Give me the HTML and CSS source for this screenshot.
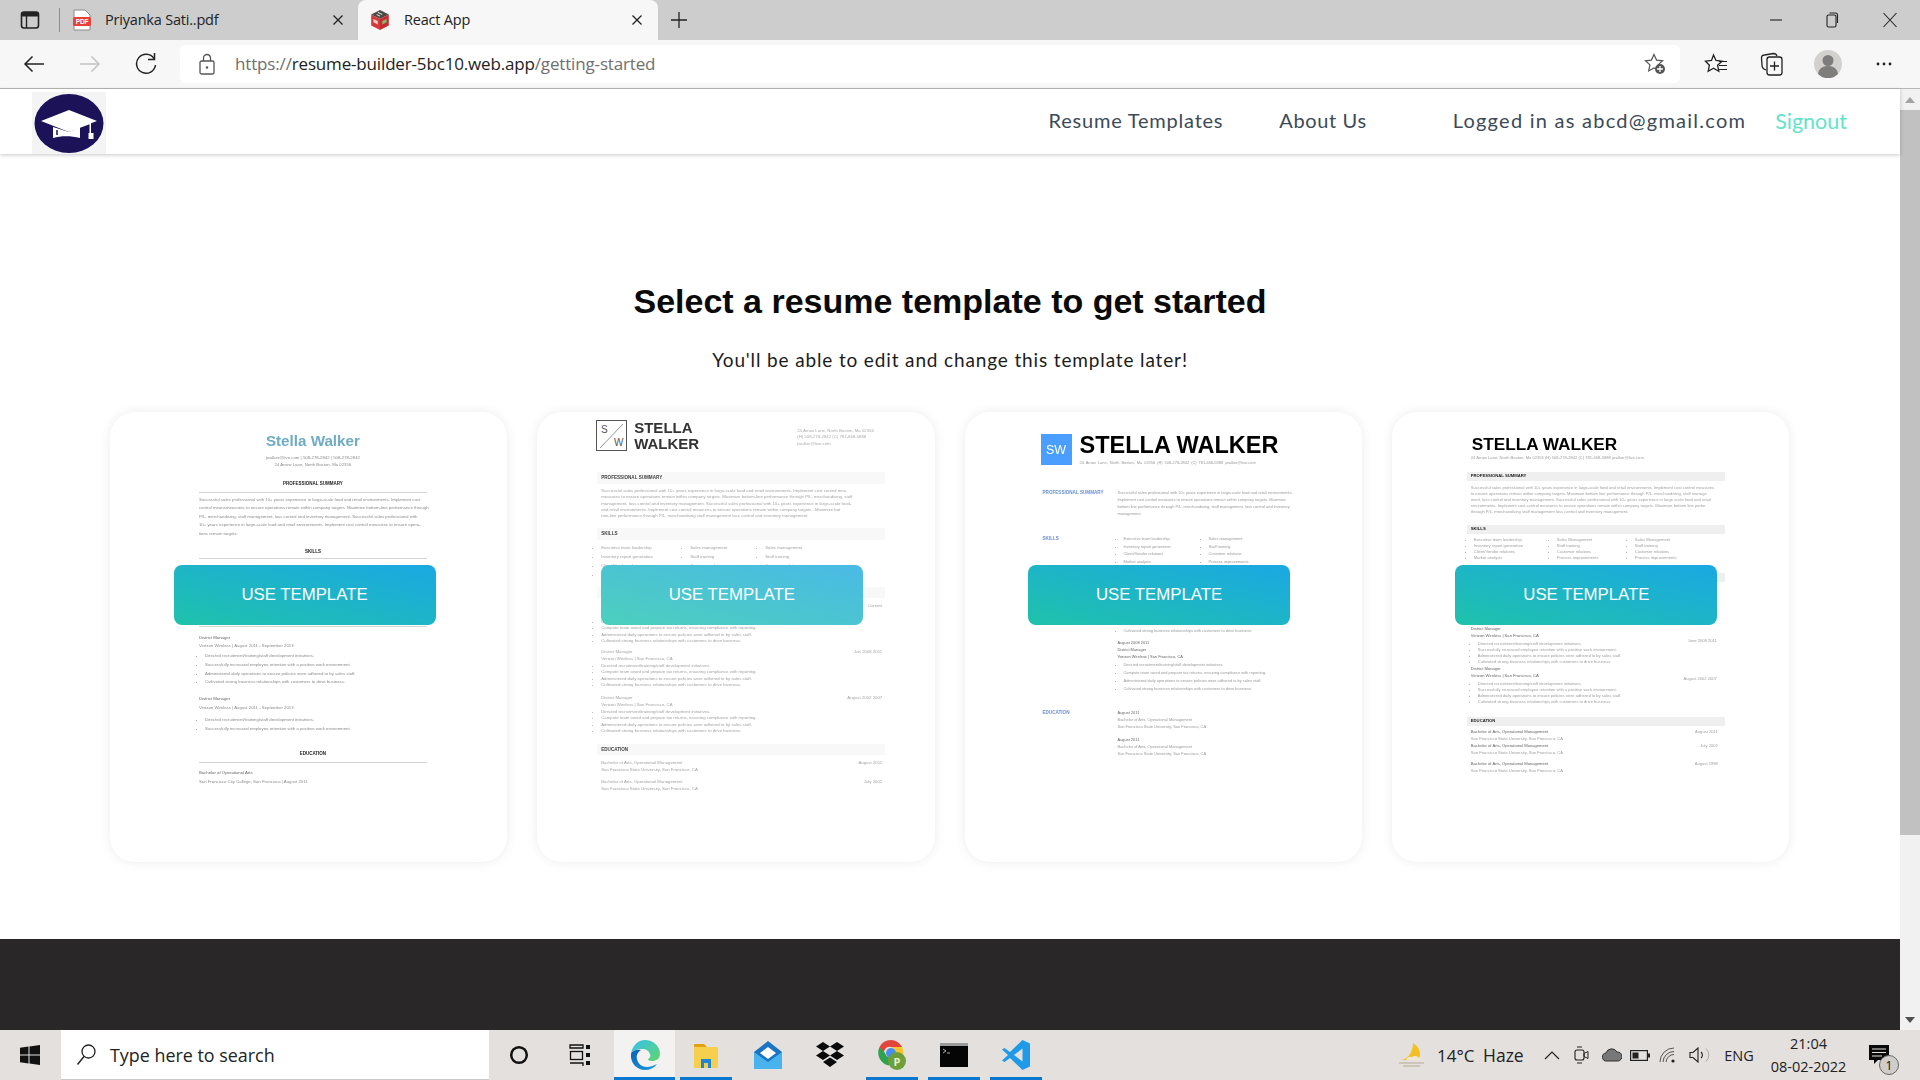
FILE: index.html
```html
<!DOCTYPE html>
<html lang="en">
<head>
<meta charset="utf-8">
<title>React App</title>
<link rel="stylesheet" href="styles.css">
</head>
<body>
<div class="screen">
  <div class="tabbar">
    <div class="tabs-toggle"><svg width="20" height="18" viewBox="0 0 20 18"><rect x="1.5" y="1" width="17" height="16" rx="2.5" fill="none" stroke="#222" stroke-width="1.6"/><rect x="1.5" y="1" width="17" height="4.5" rx="1.5" fill="#222"/><path d="M6.5 5v12" stroke="#222" stroke-width="1.4"/></svg></div>
    <div class="tab-sep"></div>
    <div class="tab tab-idle">
      <svg class="tab-ico" width="18" height="22" viewBox="0 0 18 22"><path d="M1 1h11l5 5v15H1z" fill="#fff" stroke="#8a8a8a"/><rect x="0" y="8" width="18" height="9" rx="1.5" fill="#e8413c"/><text x="9" y="15" class="pdf-txt">PDF</text></svg>
      <span class="tab-title">Priyanka Sati..pdf</span>
      <svg class="tab-x" width="16" height="16" viewBox="0 0 16 16"><path d="M3.5 3.5l9 9M12.5 3.5l-9 9" stroke="#222" stroke-width="1.3"/></svg>
    </div>
    <div class="tab tab-active">
      <svg class="tab-ico" width="22" height="22" viewBox="0 0 20 20"><path d="M10 1l8 4-8 4-8-4z" fill="#4b4b4b"/><path d="M2 5l8 4v10l-8-4z" fill="#d33a3a"/><path d="M18 5l-8 4v10l8-4z" fill="#c9292f"/><path d="M4 9l4 2v3l-4-2z" fill="#f0c9c9"/><path d="M12 11l4-2v3l-4 2z" fill="#7dbb6a"/><path d="M8 3l4 2M7 5l3 1.5" stroke="#fff" stroke-width=".8"/></svg>
      <span class="tab-title">React App</span>
      <svg class="tab-x" width="16" height="16" viewBox="0 0 16 16"><path d="M3.5 3.5l9 9M12.5 3.5l-9 9" stroke="#222" stroke-width="1.3"/></svg>
    </div>
    <div class="tab-new"><svg width="18" height="18" viewBox="0 0 18 18"><path d="M9 1v16M1 9h16" stroke="#222" stroke-width="1.3"/></svg></div>
    <div class="win-ctrls">
      <div class="win-btn"><svg width="14" height="14" viewBox="0 0 14 14"><path d="M1 7h12" stroke="#222" stroke-width="1.1"/></svg></div>
      <div class="win-btn"><svg width="14" height="16" viewBox="0 0 14 16"><rect x="2" y="3" width="9" height="12" rx="1.5" fill="none" stroke="#222" stroke-width="1.1"/><path d="M4.5 1h6a2 2 0 0 1 2 2v8" fill="none" stroke="#222" stroke-width="1.1"/></svg></div>
      <div class="win-btn win-close"><svg width="16" height="16" viewBox="0 0 16 16"><path d="M1.5 1l13 14M14.5 1l-13 14" stroke="#222" stroke-width="1.1"/></svg></div>
    </div>
  </div>

  <div class="toolbar">
    <div class="tool"><svg width="22" height="18" viewBox="0 0 22 18"><path d="M21 9H2M9.5 1.5L2 9l7.5 7.5" fill="none" stroke="#222" stroke-width="1.5"/></svg></div>
    <div class="tool"><svg width="22" height="18" viewBox="0 0 22 18"><path d="M1 9h19M12.5 1.5L20 9l-7.5 7.5" fill="none" stroke="#c4c4c4" stroke-width="1.5"/></svg></div>
    <div class="tool"><svg width="22" height="24" viewBox="0 0 22 24"><path d="M19 6.5A9.5 9.5 0 1 0 20.5 13" fill="none" stroke="#222" stroke-width="1.5"/><path d="M19.5 1v6.5H13" fill="none" stroke="#222" stroke-width="1.5"/></svg></div>
    <div class="address">
      <svg class="lock" width="18" height="22" viewBox="0 0 18 22"><rect x="2" y="8" width="14" height="13" rx="1.5" fill="none" stroke="#555" stroke-width="1.3"/><path d="M5.5 8V5a3.5 3.5 0 0 1 7 0v3" fill="none" stroke="#555" stroke-width="1.3"/><circle cx="9" cy="14.5" r="1.2" fill="#555"/></svg>
      <span class="url"><span class="url-dim">https://</span>resume-builder-5bc10.web.app<span class="url-dim">/getting-started</span></span>
      <svg class="star-add" width="22" height="22" viewBox="0 0 22 22"><path d="M10 1.5l2.6 5.6 6 .7-4.5 4.1 1.2 6-5.3-3-5.3 3 1.2-6L1.4 7.8l6-.7z" fill="none" stroke="#555" stroke-width="1.2"/><circle cx="16" cy="16" r="5" fill="#555"/><path d="M16 13v6M13 16h6" stroke="#fff" stroke-width="1.3"/></svg>
    </div>
    <div class="tool"><svg width="24" height="22" viewBox="0 0 24 22"><path d="M9.5 2l2.5 5.5 6 .7-4.4 4 1.2 6-5.3-3-5.3 3 1.2-6L1.5 8.200l6-.7z" fill="none" stroke="#222" stroke-width="1.3"/><path d="M15 8.500h8M15 12.500h8M15 16.500h8" stroke="#222" stroke-width="1.2"/></svg></div>
    <div class="tool"><svg width="24" height="24" viewBox="0 0 24 24"><path d="M6 18C3 17 2 16 2 13L1.500 6c0-2 1-3 3-3l9-1.500c2 0 3 1 3.500 2.500" fill="none" stroke="#222" stroke-width="1.3"/><rect x="7" y="5" width="15" height="18" rx="2.500" fill="none" stroke="#222" stroke-width="1.3"/><path d="M14.500 9.500v9M10 14h9" stroke="#222" stroke-width="1.3"/></svg></div>
    <div class="tool"><svg width="28" height="28" viewBox="0 0 28 28"><circle cx="14" cy="14" r="14" fill="#d3d1cd"/><circle cx="14" cy="10.500" r="5.500" fill="#7f7d7b"/><path d="M4 24c1-6 5-8 10-8s9 2 10 8a14 14 0 0 1-20 0z" fill="#7f7d7b"/></svg></div>
    <div class="tool"><svg width="18" height="4" viewBox="0 0 18 4"><circle cx="3" cy="2" r="1.400" fill="#222"/><circle cx="9" cy="2" r="1.400" fill="#222"/><circle cx="15" cy="2" r="1.400" fill="#222"/></svg></div>
  </div>

  <div class="viewport">
    <div class="page">
      <nav class="navbar">
        <div class="logo"><svg width="74" height="62" viewBox="0 0 74 62"><ellipse cx="37" cy="31.500" rx="34.500" ry="29.500" fill="#1b1258"/><path d="M37 18l28 11-6 2.300v9.700h2.500v6h-5v-6h1v-8.700L37 40 9 29z" fill="#fff"/><path d="M21 35v11c8-2.500 18-2.500 27 0V35l-11 5z" fill="#fff"/><path d="M25 38v5" stroke="#1b1258" stroke-width="1.500"/></svg></div>
        <div class="nav-links">
          <a class="nav-link">Resume Templates</a>
          <a class="nav-link nav-about">About Us</a>
          <span class="nav-link nav-user">Logged in as abcd@gmail.com</span>
          <a class="nav-signout">Signout</a>
        </div>
      </nav>

      <main class="hero">
        <h1 class="hero-title">Select a resume template to get started</h1>
        <p class="hero-sub">You'll be able to edit and change this template later!</p>

        <div class="cards">
          <article class="card">
            <div class="resume r1">
              <div class="r1-name">Stella Walker</div>
              <div class="r1-contact">jwalker@live.com | 508-278-2842 | 508-278-2842<br>24 Arrow Lane, North Boston, Ma 02356</div>
              <div class="r1-head">PROFESSIONAL SUMMARY</div>
              <p class="r1-para">Successful sales professional with 10+ years experience in large-scale food and retail environments. Implement cost<br>control meansmeasures to ensure operations remain within company targets. Maximize bottom-line performance through<br>P/L, merchandising, staff management, loss control and inventory management. Successful sales professional with<br>10+ years experience in large-scale food and retail environments. Implement cost control measures to ensure opera-<br>tions remain targets.</p>
              <div class="r1-head r1-skills">SKILLS</div>
              <div class="r1-head r1-work">WORK HISTORY</div>
              <div class="r1-job"><b>District Manager</b><br>Verizon Wireless | August 2011 - September 2013</div>
              <ul class="r1-list"><li>Directed recruitment/training/staff development initiatives.</li><li>Successfully increased employee retention with a positive work environment.</li><li>Administered daily operations to ensure policies were adhered to by sales staff.</li><li>Cultivated strong business relationships with customers to drive business.</li></ul>
              <div class="r1-job r1-job2"><b>District Manager</b><br>Verizon Wireless | August 2011 - September 2013</div>
              <ul class="r1-list r1-list2"><li>Directed recruitment/training/staff development initiatives.</li><li>Successfully increased employee retention with a positive work environment.</li></ul>
              <div class="r1-head r1-edu">EDUCATION</div>
              <div class="r1-job r1-school"><b>Bachelor of Operational Arts</b><br>San Francisco City College, San Francisco | August 2011</div>
            </div>
            <button class="use-btn">USE TEMPLATE</button>
          </article>

          <article class="card">
            <div class="resume r2">
              <header class="r2-header">
                <svg class="r2-mark" width="31" height="31" viewBox="0 0 31 31"><rect x=".5" y=".5" width="30" height="30" fill="#fff" stroke="#555"/><path d="M27 4L4 28" stroke="#777" stroke-width=".8"/><text x="5" y="13" class="r2-mark-txt">S</text><text x="18" y="26" class="r2-mark-txt">W</text></svg>
                <div class="r2-name">STELLA<br>WALKER</div>
                <div class="r2-contact">24 Arrow Lane, North Boston, Ma 02356<br>(H) 508-278-2842 (C) 781-668-5888<br>jwalker@live.com</div>
              </header>
              <div class="r2-bar r2-first">PROFESSIONAL SUMMARY</div>
              <p class="r2-para">Successful sales professional with 10+ years experience in large-scale food and retail environments. Implement cost control mea<br>measures to ensure operations remain within company targets. Maximize bottom-line performance through P/L, merchandising, staff<br>management, loss control and inventory management. Successful sales professional with 10+ years experience in large-scale food-<br>and retail environments. Implement cost control measures to ensure operations remain within company targets . Maximize bot<br>tom-line performance through P/L, merchandising staff management loss control and inventory management.</p>
              <div class="r2-bar">SKILLS</div>
              <div class="r2-skills">
                <ul><li>Executive team leadership</li><li>Inventory report generation</li><li>Client/Vendor relations</li><li>Market analysis</li></ul>
                <ul><li>Sales management</li><li>Staff training</li><li>Customer relations</li><li>Process improvements</li></ul>
                <ul><li>Sales management</li><li>Staff training</li><li>Customer relations</li><li>Process improvements</li></ul>
              </div>
              <div class="r2-bar r2-bar3">WORK HISTORY</div>
              <div class="r2-job r2-job1"><div class="r2-row"><span>District Manager</span><span>Current</span></div><div>Verizon Wireless | San Francisco, CA</div></div>
              <ul class="r2-list r2-list1"><li>Directed recruitment/training/staff development initiatives.</li><li>Compute team owed and prepare tax returns, ensuring compliance with reporting.</li><li>Administered daily operations to ensure policies were adhered to by sales staff.</li><li>Cultivated strong business relationships with customers to drive business.</li></ul>
              <div class="r2-job"><div class="r2-row"><span>District Manager</span><span>Jan 2008 2011</span></div><div>Verizon Wireless | San Francisco, CA</div></div>
              <ul class="r2-list"><li>Directed recruitment/training/staff development initiatives.</li><li>Compute team owed and prepare tax returns, ensuring compliance with reporting.</li><li>Administered daily operations to ensure policies were adhered to by sales staff.</li><li>Cultivated strong business relationships with customers to drive business.</li></ul>
              <div class="r2-job"><div class="r2-row"><span>District Manager</span><span>August 2002 2007</span></div><div>Verizon Wireless | San Francisco, CA</div></div>
              <ul class="r2-list"><li>Directed recruitment/training/staff development initiatives.</li><li>Compute team owed and prepare tax returns, ensuring compliance with reporting.</li><li>Administered daily operations to ensure policies were adhered to by sales staff.</li><li>Cultivated strong business relationships with customers to drive business.</li></ul>
              <div class="r2-bar r2-bar4">EDUCATION</div>
              <div class="r2-job r2-edu1"><div class="r2-row"><span>Bachelor of Arts, Operational Management</span><span>August 2011</span></div><div>San Francisco State University, San Francisco, CA</div></div>
              <div class="r2-job r2-edu2"><div class="r2-row"><span>Bachelor of Arts, Operational Management</span><span>July 2002</span></div><div>San Francisco State University, San Francisco, CA</div></div>
            </div>
            <button class="use-btn use-btn-hover">USE TEMPLATE</button>
          </article>

          <article class="card">
            <div class="resume r3">
              <header class="r3-header">
                <div class="r3-mark">SW</div>
                <div class="r3-id">
                  <div class="r3-name">STELLA WALKER</div>
                  <div class="r3-contact">24 Arrow Lane, North Boston, Ma 02356 (H) 508-278-2842 (C) 781-668-5888 jwalker@live.com</div>
                </div>
              </header>
              <section class="r3-sec r3-sum">
                <div class="r3-label">PROFESSIONAL SUMMARY</div>
                <p class="r3-para">Successful sales professional with 10+ years experience in large-scale food and retail environments.<br>Implement cost control measures to ensure operations remain within company targets. Maximize<br>bottom line performance through P/L, merchandising, staff management, loss control and inventory<br>management.</p>
              </section>
              <section class="r3-sec r3-skl">
                <div class="r3-label">SKILLS</div>
                <div class="r3-skills">
                  <ul><li>Executive team leadership</li><li>Inventory report generation</li><li>Client/Vendor relations</li><li>Market analysis</li></ul>
                  <ul><li>Sales management</li><li>Staff training</li><li>Customer relations</li><li>Process improvements</li></ul>
                </div>
              </section>
              <section class="r3-sec r3-work">
                <div class="r3-label">WORK HISTORY</div>
                <div>
                  <div class="r3-meta">August 2011 2018<br>District Manager<br>Verizon Wireless | San Francisco, CA</div>
                  <ul class="r3-list"><li>Directed recruitment/training/staff development initiatives.</li><li>Compute team owed and prepare tax returns, ensuring compliance with reporting.</li><li>Administered daily operations to ensure policies were adhered to by sales staff.</li><li>Cultivated strong business relationships with customers to drive business.</li></ul>
                  <div class="r3-meta r3-meta2">August 2008 2011<br>District Manager<br>Verizon Wireless | San Francisco, CA</div>
                  <ul class="r3-list"><li>Directed recruitment/training/staff development initiatives.</li><li>Compute team owed and prepare tax returns, ensuring compliance with reporting.</li><li>Administered daily operations to ensure policies were adhered to by sales staff.</li><li>Cultivated strong business relationships with customers to drive business.</li></ul>
                </div>
              </section>
              <section class="r3-sec r3-edu">
                <div class="r3-label">EDUCATION</div>
                <div>
                  <div class="r3-school">August 2011<br><span>Bachelor of Arts, Operational Management</span><br><span>San Francisco State University, San Francisco, CA</span></div>
                  <div class="r3-school r3-school2">August 2011<br><span>Bachelor of Arts, Operational Management</span><br><span>San Francisco State University, San Francisco, CA</span></div>
                </div>
              </section>
            </div>
            <button class="use-btn">USE TEMPLATE</button>
          </article>

          <article class="card">
            <div class="resume r4">
              <div class="r4-name">STELLA WALKER</div>
              <div class="r4-contact">24 Arrow Lane, North Boston, Ma 02356 (H) 508-278-2842 (C) 781-668-5888 jwalker@live.com</div>
              <div class="r4-bar r4-bar1">PROFESSIONAL SUMMARY</div>
              <p class="r4-para">Successful sales professional with 10+ years experience in large-scale food and retail environments. Implement cost control measures<br>to ensure operations remain within company targets. Maximize bottom line performance through P/L, merchandising, staff manage<br>ment, loss control and inventory management. Successful sales professional with 10+ years experience in large scale food and retail<br>environments. Implement cost control measures to ensure operations remain within company targets. Maximize bottom line perfor<br>through P/L, merchandising staff management loss control and inventory management.</p>
              <div class="r4-bar r4-bar2">SKILLS</div>
              <div class="r4-skills">
                <ul><li>Executive team leadership</li><li>Inventory report generation</li><li>Client/Vendor relations</li><li>Market analysis</li></ul>
                <ul><li>Sales Management</li><li>Staff training</li><li>Customer relations</li><li>Process improvements</li></ul>
                <ul><li>Sales Management</li><li>Staff training</li><li>Customer relations</li><li>Process improvements</li></ul>
              </div>
              <div class="r4-bar r4-bar3">WORK HISTORY</div>
              <div class="r4-job r4-job0"><div><b>District Manager</b><br><b>Verizon Wireless | San Francisco, CA</b><ul><li>Directed recruitment/training/staff development initiatives.</li><li>Successfully increased employee retention with a positive work environment.</li><li>Administered daily operations to ensure policies were adhered to by sales staff.</li></ul></div><span>Current</span></div>
              <div class="r4-job r4-job1"><div><b>District Manager</b><br><b>Verizon Wireless | San Francisco, CA</b><ul><li>Directed recruitment/training/staff development initiatives.</li><li>Successfully increased employee retention with a positive work environment.</li><li>Administered daily operations to ensure policies were adhered to by sales staff.</li><li>Cultivated strong business relationships with customers to drive business.</li></ul></div><span class="r4-date1">June 2008 2011</span></div>
              <div class="r4-job r4-job2"><div><b>District Manager</b><br><b>Verizon Wireless | San Francisco, CA</b><ul><li>Directed recruitment/training/staff development initiatives.</li><li>Successfully increased employee retention with a positive work environment.</li><li>Administered daily operations to ensure policies were adhered to by sales staff.</li><li>Cultivated strong business relationships with customers to drive business.</li></ul></div><span class="r4-date2">August 2002 2007</span></div>
              <div class="r4-bar r4-bar4">EDUCATION</div>
              <div class="r4-school r4-s1"><div><b>Bachelor of Arts, Operational Management</b><br>San Francisco State University, San Francisco, CA</div><span>August 2011</span></div>
              <div class="r4-school r4-s2"><div><b>Bachelor of Arts, Operational Management</b><br>San Francisco State University, San Francisco, CA</div><span>July 2002</span></div>
              <div class="r4-school r4-s3"><div><b>Bachelor of Arts, Operational Management</b><br>San Francisco State University, San Francisco, CA</div><span>August 1998</span></div>
            </div>
            <button class="use-btn">USE TEMPLATE</button>
          </article>
        </div>
      </main>
      <footer class="site-footer"></footer>
    </div>
    <div class="scrollbar">
      <div class="sb-arrow"><svg width="10" height="6" viewBox="0 0 10 6"><path d="M5 0l5 6H0z" fill="#a3a3a3"/></svg></div>
      <div class="sb-thumb"></div>
      <div class="sb-arrow sb-down"><svg width="10" height="6" viewBox="0 0 10 6"><path d="M5 6L0 0h10z" fill="#505050"/></svg></div>
    </div>
  </div>

  <div class="taskbar">
    <div class="tb-start"><svg width="20" height="20" viewBox="0 0 20 20"><path d="M0 2.800L8.500 1.600V9.500H0zM9.500 1.500L20 0V9.500H9.500zM0 10.500H8.500V18.400L0 17.200zM9.500 10.500H20V20L9.500 18.500z" fill="#111"/></svg></div>
    <div class="tb-search">
      <svg width="20" height="22" viewBox="0 0 20 22"><circle cx="12.500" cy="7.500" r="6.500" fill="none" stroke="#222" stroke-width="1.300"/><path d="M8 12.500L1.500 20.500" stroke="#222" stroke-width="1.400"/></svg>
      <span>Type here to search</span>
    </div>
    <div class="tb-slot tb-cortana"><svg width="20" height="20" viewBox="0 0 20 20"><circle cx="10" cy="10" r="7.800" fill="none" stroke="#111" stroke-width="2.500"/></svg></div>
    <div class="tb-slot tb-tasks"><svg width="22" height="22" viewBox="0 0 22 22"><path d="M1 1h13v3H1zM1 19h13v3" fill="none" stroke="#111" stroke-width="1.300"/><rect x="1.500" y="7.500" width="12" height="8" fill="none" stroke="#111" stroke-width="1.300"/><rect x="17" y="1" width="4" height="4" fill="#111"/><rect x="17" y="9" width="4" height="4" fill="#111"/><rect x="17" y="17" width="4" height="4" fill="#111"/></svg></div>
    <div class="tb-slot tb-app tb-edge tb-on">
      <svg width="30" height="30" viewBox="0 0 30 30"><defs><linearGradient id="eg1" x1="0" y1="0" x2="1" y2="1"><stop offset="0" stop-color="#0c5fb5"/><stop offset="1" stop-color="#1a9fe0"/></linearGradient><linearGradient id="eg2" x1="0" y1="0" x2="1" y2="1"><stop offset="0" stop-color="#35c1f1"/><stop offset="1" stop-color="#5fd66a"/></linearGradient></defs><path d="M1 14C2 6 8 0 15 0c8 0 15 6 15 14 0 5-4 7-8 7-3 0-4-1-4-2 2-1 3-3 2-5-1-3-4-5-8-5-5 0-10 2-11 5z" fill="url(#eg2)"/><path d="M1 14c1-3 6-5 10-4-3 2-5 5-4 9 1 5 5 8 10 8 3 0 6-1 10-3-3 4-7 6-12 6C7 30 0 23 1 14z" fill="url(#eg1)"/></svg>
    </div>
    <div class="tb-slot tb-app tb-on">
      <svg width="28" height="28" viewBox="0 0 28 28"><path d="M2 3h10l3 3h-13z" fill="#e3a20f"/><rect x="2" y="6" width="24" height="21" rx="1" fill="#f6cf4c"/><path d="M9 27v-9h10v9h-3v-5h-4v5z" fill="#1f87d6"/></svg>
    </div>
    <div class="tb-slot tb-app">
      <svg width="30" height="28" viewBox="0 0 30 28"><path d="M1 11L15 0l14 11v17H1z" fill="#1a74c4"/><path d="M7 12l8-6 8 6-8 6z" fill="#fff"/><path d="M1 11l14 10 14-10v17H1z" fill="#49b3ee"/></svg>
    </div>
    <div class="tb-slot tb-app">
      <svg width="28" height="26" viewBox="0 0 28 26"><path d="M7 0l7 4.500L7 9 0 4.500zM21 0l7 4.500L21 9l-7-4.500zM7 9l7 4.500L7 18l-7-4.500zM21 9l7 4.500L21 18l-7-4.500zM14 15.500l7 4.500-7 5-7-5z" fill="#0a0a0a"/></svg>
    </div>
    <div class="tb-slot tb-app tb-on">
      <svg width="30" height="32" viewBox="0 0 30 32"><path d="M14 1A13 13 0 0 0 2.500 8l6 10A6 6 0 0 1 14 8h11A13 13 0 0 0 14 1z" fill="#e2463a"/><path d="M2.500 8A13 13 0 0 0 12 26.500l5-8.500A6 6 0 0 1 8 14z" fill="#2ea24f"/><path d="M25 8H14a6 6 0 0 1 4 9l-5 9.500A13 13 0 0 0 25 8z" fill="#f7c528"/><circle cx="14" cy="14" r="5" fill="#4a8cf0"/><circle cx="20" cy="22" r="9" fill="#6f9f3a"/><text x="20" y="26.500" class="chrome-p">P</text></svg>
    </div>
    <div class="tb-slot tb-app tb-on">
      <svg width="28" height="24" viewBox="0 0 28 24"><rect width="28" height="24" fill="#050505"/><rect width="28" height="3" fill="#9a9a9a"/><path d="M3 6l3 2-3 2M7 10h3" stroke="#d8d8d8" stroke-width=".8" fill="none"/></svg>
    </div>
    <div class="tb-slot tb-app tb-on">
      <svg width="30" height="30" viewBox="0 0 30 30"><path d="M21.500 0L29 3.500v23L21.500 30 9 18l-5.500 4L1 20.500 7 15 1 9.500 3.500 8 9 12zM21.500 8.500L13 15l8.500 6.500z" fill="#1f9ae8"/></svg>
    </div>
    <div class="tray">
      <div class="tr-slot tr-weather"><svg width="30" height="26" viewBox="0 0 30 26"><path d="M16 1c7 4 9 12 5 17H3c8 0 13-8 13-17z" fill="#f4bf21"/><path d="M9 18c1-3 4-4 6-3 2-2 6-1 7 1 2 0 4 1 4 2z" fill="#efe6d3"/><path d="M2 21h25M6 24h17" stroke="#b8a894" stroke-width="1.100"/></svg></div>
      <span class="tr-temp">14°C</span>
      <span class="tr-haze">Haze</span>
      <div class="tr-slot tr-chev"><svg width="16" height="9" viewBox="0 0 16 9"><path d="M1 8l7-7 7 7" fill="none" stroke="#222" stroke-width="1.200"/></svg></div>
      <div class="tr-slot tr-video"><svg width="15" height="20" viewBox="0 0 15 20"><rect x="1" y="5" width="9" height="10" rx="2" fill="none" stroke="#222" stroke-width="1.100"/><path d="M10 8.500l4-2v7l-4-2zM3 2h5M3 18h5" fill="none" stroke="#222"/></svg></div>
      <div class="tr-slot tr-cloud"><svg width="20" height="14" viewBox="0 0 20 14"><path d="M5 13a4 4 0 0 1-1-8 6 6 0 0 1 11-1 4.500 4.500 0 0 1 1 9z" fill="#777" stroke="#333"/></svg></div>
      <div class="tr-slot tr-battery"><svg width="20" height="11" viewBox="0 0 20 11"><rect x=".6" y=".6" width="16.800" height="9.800" fill="none" stroke="#222" stroke-width="1.200"/><rect x="2.500" y="2.500" width="6" height="6" fill="#222"/><rect x="18" y="3.500" width="2" height="4" fill="#222"/></svg></div>
      <div class="tr-slot tr-wifi"><svg width="17" height="16" viewBox="0 0 17 16"><path d="M1 15A14 14 0 0 1 15 1M4 15A11 11 0 0 1 15 4.500M7 15a8 8 0 0 1 8-7.500" fill="none" stroke="#555"/><circle cx="14" cy="14" r="1.600" fill="#222"/></svg></div>
      <div class="tr-slot tr-sound"><svg width="21" height="16" viewBox="0 0 21 16"><path d="M1 5.500h3L9 1v14l-5-4.500H1z" fill="none" stroke="#222" stroke-width="1.100"/><path d="M12 5a4 4 0 0 1 0 6" fill="none" stroke="#222" stroke-width="1.100"/><path d="M17 1.500a9 9 0 0 1 0 13" fill="none" stroke="#aaa"/></svg></div>
      <span class="tr-lang">ENG</span>
      <div class="tr-clock"><span>21:04</span><span>08-02-2022</span></div>
      <div class="tr-notify">
        <svg width="20" height="20" viewBox="0 0 20 20"><path d="M0 0h20v15H9l-4 4v-4H0z" fill="#0a0a0a"/><path d="M3 4h14M3 7.500h14M3 11h10" stroke="#e4e0dd" stroke-width="1"/></svg>
        <span class="tr-badge">1</span>
      </div>
    </div>
  </div>
</div>
</body>
</html>
```

FILE: styles.css
```css
* { box-sizing: border-box; }
html, body { margin: 0; padding: 0; }
body { font-family: "Open Sans", "Noto Sans", sans-serif; background: #fff; overflow: hidden; }
.screen { width: 1920px; height: 1080px; display: flex; flex-direction: column; overflow: hidden; }

/* Browser tabs */
.tabbar { height: 40px; background: #cdcdcd; display: flex; align-items: stretch; flex: none; }
.tabs-toggle { width: 44px; padding-left: 20px; display: flex; align-items: center; }
.tab-sep { width: 1px; height: 24px; margin: 8px 0 0 15px; background: #8d8d8d; }
.tab { display: flex; align-items: center; font-size: 14.5px; color: #222; letter-spacing: -.2px; }
.tab-idle { width: 298px; padding: 0 12px 0 13px; }
.tab-active { width: 300px; padding: 0 13px 0 11px; background: #f7f7f7; border-radius: 8px 8px 0 0; }
.tab-ico { flex: none; }
.tab-title { padding-bottom: 2px; }
.tab-idle .tab-title { margin-left: 14px; }
.tab-active .tab-title { margin-left: 13px; }
.tab-x { margin-left: auto; }
.tab-new { margin-left: 12px; display: flex; align-items: center; }
.pdf-txt { font: bold 6.500px "Liberation Sans", sans-serif; fill: #fff; text-anchor: middle; }
.win-ctrls { margin-left: auto; display: flex; }
.win-btn { width: 56px; display: flex; align-items: center; justify-content: center; }
.win-close { width: 60px; }

/* Browser toolbar */
.toolbar { height: 49px; flex: none; background: #f7f7f7; border-bottom: 1px solid #b8b8b8; padding: 0 0 1px 6px; display: flex; align-items: center; }
.tool { width: 56px; display: flex; align-items: center; justify-content: center; flex: none; }
.address { width: 1500px; height: 38px; margin: 0 8px 0 6px; padding: 0 14px 0 18px; background: #fff; border-radius: 6px; display: flex; align-items: center; flex: none; }
.url { margin-left: 19px; font-size: 17px; color: #222; letter-spacing: -.16px; }
.url-dim { color: #6f6f6f; }
.star-add { margin-left: auto; }

/* Page */
.viewport { flex: 1; display: flex; min-height: 0; }
.page { flex: 1; display: flex; flex-direction: column; min-width: 0; }
.navbar { height: 65px; flex: none; display: flex; justify-content: space-between; background: #fff; box-shadow: 0 1px 4px rgba(0,0,0,.22); position: relative; padding-right: 53px; }
.logo { width: 74px; height: 62px; margin: 3px 0 0 32px; background: #f4f4f4; }
.logo svg { display: block; }
.nav-links { display: flex; align-items: center; padding-bottom: 3px; font-family: Lato, "Open Sans", sans-serif; font-size: 20px; }
.nav-link { color: #3c4a57; letter-spacing: .78px; white-space: nowrap; }
.nav-about { margin-left: 56px; letter-spacing: .62px; }
.nav-user { margin-left: 86px; letter-spacing: 1.25px; }
.nav-signout { margin-left: 29px; color: #62e3c8; font-size: 21.500px; padding-top: 2px; }

.hero { flex: none; padding: 127px 0 77px; text-align: center; }
.hero-title { margin: 0; font: bold 34px/40px "Liberation Sans", Arial, sans-serif; color: #0a0a0a; }
.hero-sub { margin: 27px 0 0; font: 400 19px/24px Lato, "Open Sans", sans-serif; letter-spacing: .86px; color: #1c1c1c; }

.cards { margin-top: 40px; padding-right: 1px; display: flex; justify-content: center; gap: 30px; text-align: left; }
.card { width: 397.300px; height: 450px; position: relative; background: #fff; border-radius: 25px; box-shadow: 0 0 12px rgba(0,0,0,.08); overflow: hidden; }
.use-btn { position: absolute; left: 63.600px; top: 153px; width: 262px; height: 60px; padding: 0; border: 0; border-radius: 8px; background: linear-gradient(to top right, #1fc2ab, #1ba8e3); color: #fff; font: 16.800px "Liberation Sans", Arial, sans-serif; }
.use-btn-hover { background: linear-gradient(to top right, #4ccfbd, #4abae6); }

.site-footer { flex: 1; background: #292728; }

.scrollbar { width: 20px; flex: none; background: #f1f1f1; display: flex; flex-direction: column; }
.sb-arrow { height: 21px; display: flex; align-items: center; justify-content: center; flex: none; }
.sb-thumb { height: 725px; flex: none; background: #c1c1c1; }
.sb-down { margin-top: auto; }

/* Thumbnails */
.resume { font-family: "Liberation Sans", Arial, sans-serif; font-size: 4.300px; color: #8b8b8b; white-space: nowrap; filter: blur(.3px); }
.resume p { margin: 0; }
.resume ul { margin: 0; padding: 0 0 0 6px; }
.resume b { font-weight: 400; color: #666; }

/* Resume 1 */
.r1 { width: 228px; margin-left: 89px; padding-top: 20px; }
.r1-name { font: bold 15.200px/18px "Liberation Sans", sans-serif; color: #6fabc4; text-align: center; }
.r1-contact { margin-top: 4px; line-height: 7px; text-align: center; }
.r1-head { margin-top: 11.500px; padding-bottom: 5px; border-bottom: 1px solid #d4d4d4; font-weight: bold; font-size: 4.500px; line-height: 7px; color: #222; text-align: center; }
.r1 p.r1-para { margin-top: 3px; line-height: 8.500px; }
.r1-skills { margin-top: 10px; padding-bottom: 2.500px; }
.r1-work { margin-top: 55px; }
.r1-job { margin-top: 7px; line-height: 8.800px; }
.r1-job2 { margin-top: 8px; }
.r1-list { line-height: 8.800px; }
.r1 ul.r1-list { margin-top: 1px; }
.r1 ul.r1-list2 { margin-top: 3px; }
.r1-edu { margin-top: 17px; padding-bottom: 4.500px; }
.r1-school { margin-top: 6px; }

/* Resume 2 */
.r2 { width: 288px; margin-left: 60px; padding-top: 8px; color: #a3a3a3; }
.r2-header { display: flex; }
.r2-mark { margin-left: -1px; flex: none; }
.r2-mark-txt { font: 10px "Liberation Sans", sans-serif; fill: #555; }
.r2-name { margin-left: 7px; font: bold 15px/16px "Liberation Sans", sans-serif; color: #333; }
.r2-contact { margin-left: 98px; margin-top: 7.500px; line-height: 6.700px; color: #aaa; }
.r2-bar { height: 12px; margin-top: 8.750px; padding-left: 4px; background: #f8f8f8; line-height: 12px; font-size: 4.600px; font-weight: bold; color: #444; }
.r2-first { margin-top: 20px; }
.r2 p.r2-para { margin-top: 4px; padding-left: 4px; line-height: 6.250px; }
.r2-skills { margin-top: 3px; padding-left: 1px; display: grid; grid-template-columns: 89px 75px 1fr; line-height: 9px; }
.r2 .r2-skills ul { padding-left: 3px; }
.r2-bar3 { margin-top: 8px; height: 11px; line-height: 11px; }
.r2-job { margin-top: 4.750px; padding: 0 3px 0 4px; line-height: 7px; }
.r2-job1 { margin-top: 4px; }
.r2-list1 + .r2-job { margin-top: 2.750px; }
.r2-row { display: flex; justify-content: space-between; }
.r2 ul.r2-list { margin-top: 1.250px; padding-left: 4px; line-height: 6.500px; }
.r2 ul.r2-list1 { margin-top: 2.750px; }
.r2-bar4 { margin-top: 8.750px; height: 11px; line-height: 11px; }
.r2-edu1 { margin-top: 4px; }
.r2-edu2 { margin-top: 5px; }

/* Resume 3 */
.r3 { width: 290px; margin-left: 76px; padding-top: 22px; color: #9a9a9a; font-size: 3.950px; }
.r3-header { display: flex; gap: 8px; }
.r3-mark { width: 31px; height: 31px; background: #4a9eff; color: #fff; font: 12.500px/33px "Liberation Sans", sans-serif; text-align: center; flex: none; }
.r3-name { margin-top: -1px; font: bold 23.500px/24px "Liberation Sans", sans-serif; color: #000; }
.r3-contact { margin-top: 1.500px; line-height: 7px; word-spacing: .9px; }
.r3-sec { display: grid; grid-template-columns: 77px 1fr; }
.r3-label { padding-left: 2px; font-size: 4.600px; line-height: 7px; font-weight: bold; color: #6a8fd0; }
.r3-sum { margin-top: 23px; }
.r3 p.r3-para { line-height: 7px; }
.r3-skl { margin-top: 18.500px; }
.r3-skills { display: grid; grid-template-columns: 85px 1fr; line-height: 7.700px; }
.r3-work { margin-top: 17px; }
.r3-meta { line-height: 6.700px; color: #666; }
.r3-meta2 { margin-top: 5.500px; }
.r3-list { line-height: 8px; }
.r3-edu { margin-top: 16.500px; }
.r3-school { line-height: 7.200px; color: #666; }
.r3-school span { color: #9a9a9a; }
.r3-school2 { margin-top: 5px; }

/* Resume 4 */
.r4 { width: 258px; margin-left: 75px; padding-top: 23px; color: #a0a0a0; font-size: 4.100px; }
.r4-name { padding-left: 5px; font: bold 17.200px/18px "Liberation Sans", sans-serif; color: #000; }
.r4-contact { margin-top: 1px; padding-left: 4px; line-height: 7px; }
.r4-bar { height: 8.500px; padding-left: 4px; background: #efefef; font-size: 4.200px; line-height: 8.500px; font-weight: bold; color: #222; }
.r4-bar1 { margin-top: 11px; height: 9px; }
.r4 p.r4-para { margin-top: 3.500px; padding-left: 4px; line-height: 6px; }
.r4-bar2 { margin-top: 10.500px; }
.r4-skills { margin-top: 3px; padding-left: 1px; display: grid; grid-template-columns: 83px 78px 1fr; line-height: 6.200px; }
.r4-bar3 { margin-top: 11.700px; }
.r4-job { display: flex; justify-content: space-between; padding: 0 8px 0 4px; line-height: 6.500px; }
.r4-job0 { margin-top: 3px; height: 38.500px; overflow: hidden; }
.r4-job1 { margin-top: 3px; }
.r4-job2 { margin-top: 1.500px; }
.r4-date1 { margin-top: 11.500px; }
.r4-date2 { margin-top: 9.500px; }
.r4 .r4-job ul { margin-top: 1.500px; line-height: 6px; padding-left: 7px; }
.r4-bar4 { margin-top: 12.500px; }
.r4-school { display: flex; justify-content: space-between; padding: 0 7px 0 4px; line-height: 6.500px; }
.r4-s1 { margin-top: 3.750px; }
.r4-s2 { margin-top: 1px; }
.r4-s3 { margin-top: 5px; }

/* Taskbar */
.taskbar { height: 50px; flex: none; background: #e4e0dd; display: flex; align-items: stretch; }
.tb-start { width: 61px; padding-left: 20px; display: flex; align-items: center; }
.tb-search { width: 428px; background: #fff; border-bottom: 1px solid #c8c8c8; padding-left: 15px; display: flex; align-items: center; gap: 14px; font-size: 17.900px; color: #222; }
.tb-slot { display: flex; align-items: center; justify-content: center; position: relative; flex: none; }
.tb-cortana { width: 60px; }
.tb-tasks { width: 62px; }
.tb-app { width: 62px; }
.tb-edge { width: 61px; margin-left: 3px; background: #f3f2f1; }
.tb-on::after { content: ""; position: absolute; left: 5px; right: 5px; bottom: 0; height: 3px; background: #0a78d0; }
.tb-edge.tb-on::after { left: 0; right: 0; }
.chrome-p { font: bold 11px "Open Sans", sans-serif; fill: #e6f0d0; text-anchor: middle; }

.tray { margin-left: auto; display: flex; align-items: center; font-size: 15.500px; color: #222; }
.tr-slot { display: flex; align-items: center; justify-content: center; flex: none; }
.tr-weather { width: 36px; }
.tr-temp { margin-left: 7px; font-size: 17px; width: 36px; }
.tr-haze { margin-left: 10px; font-size: 17.500px; width: 55px; }
.tr-chev { width: 28px; }
.tr-video { width: 30px; }
.tr-cloud { width: 32px; }
.tr-battery { width: 24px; }
.tr-wifi { width: 30px; }
.tr-sound { width: 34px; }
.tr-lang { width: 46px; text-align: center; font-size: 14.500px; }
.tr-clock { width: 93px; display: flex; flex-direction: column; align-items: center; gap: 3px; font-size: 14.500px; line-height: 20px; }
.tr-notify { width: 65px; position: relative; padding-left: 14px; display: flex; align-items: center; }
.tr-badge { position: absolute; left: 24px; top: 10px; width: 20px; height: 20px; border-radius: 50%; background: #d0cdca; border: 1px solid #666; font-size: 13px; line-height: 18px; text-align: center; color: #111; }
```
